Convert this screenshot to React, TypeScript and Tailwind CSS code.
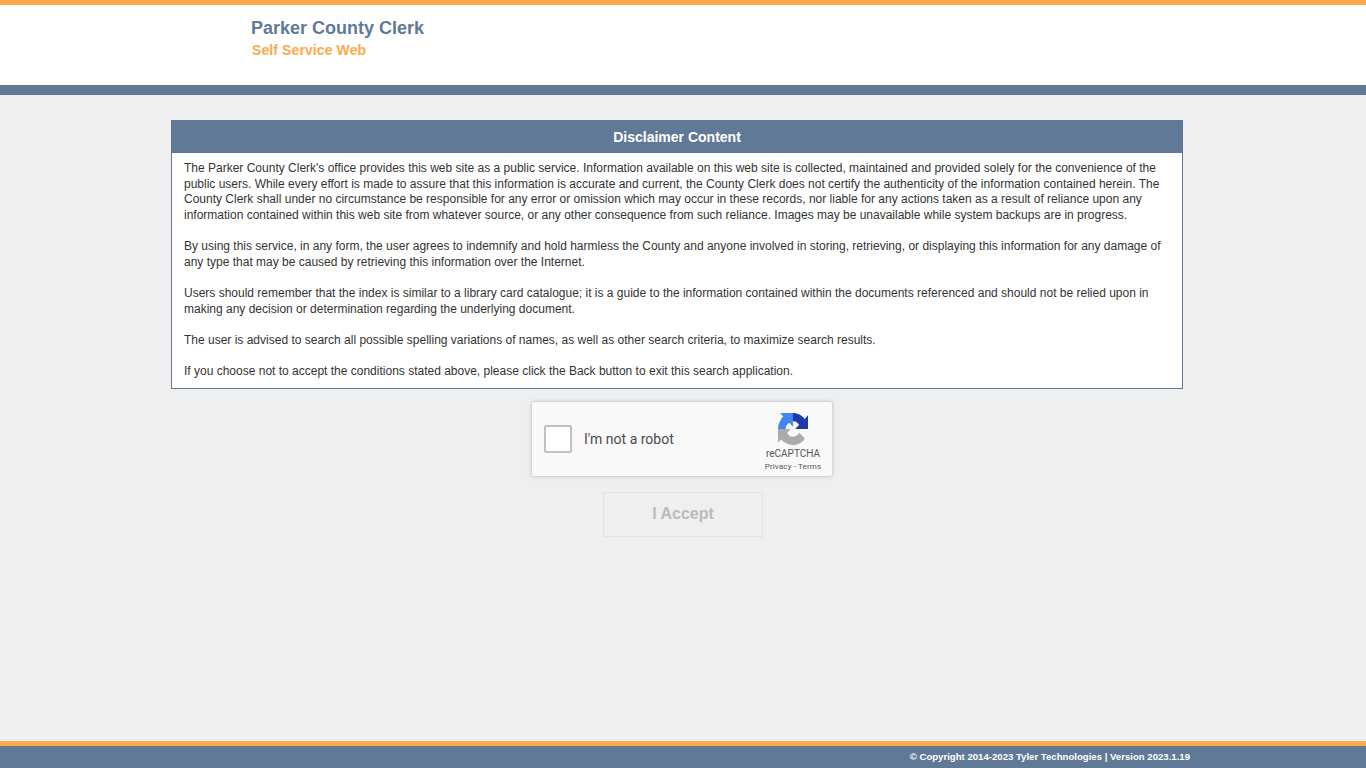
import React from "react";

function RecaptchaLogo() {
  return (
    <svg width="30" height="32" viewBox="0 0 64 64" preserveAspectRatio="none" className="block">
      <path d="M64 31.955l-.033-1.37V4.687l-7.16 7.16C50.948 4.674 42.033.093 32.05.093c-10.4 0-19.622 4.96-25.458 12.64l11.736 11.86a15.55 15.55 0 0 1 4.754-5.334c2.05-1.6 4.952-2.906 8.968-2.906.485 0 .86.057 1.135.163 4.976.393 9.288 3.14 11.828 7.124l-8.307 8.307L64 31.953" fill="#1c3aa9" />
      <path d="M31.862.094l-1.37.033H4.594l7.16 7.16C4.58 13.147 0 22.06 0 32.046c0 10.4 4.96 19.622 12.64 25.458l11.86-11.736a15.55 15.55 0 0 1-5.334-4.754c-1.6-2.05-2.906-4.952-2.906-8.968 0-.485.057-.86.163-1.135.393-4.976 3.14-9.288 7.124-11.828l8.307 8.307L31.86.094" fill="#4285f4" />
      <path d="M.001 32.045l.033 1.37v25.898l7.16-7.16c5.86 7.173 14.774 11.754 24.76 11.754 10.4 0 19.622-4.96 25.458-12.64l-11.736-11.86a15.55 15.55 0 0 1-4.754 5.334c-2.05 1.6-4.952 2.906-8.968 2.906-.485 0-.86-.057-1.135-.163-4.976-.393-9.288-3.14-11.828-7.124l8.307-8.307L0 32.047" fill="#ababab" />
    </svg>
  );
}

export default function App() {
  return (
    <div className="flex min-h-screen flex-col bg-[#efefef] font-['Liberation_Sans',Arial,sans-serif]">
      <header className="h-[95px] border-t-[5px] border-b-[10px] border-t-[#ffa94d] border-b-[#607996] bg-white pt-[11px] pl-[251px]">
        <h1 className="text-[18px] leading-[24px] font-bold text-[#607996]">Parker County Clerk</h1>
        <p className="ml-px text-[14px] leading-[20px] font-bold tracking-[0.1px] text-[#ffa94d]">Self Service Web</p>
      </header>

      <main className="flex flex-1 flex-col items-center pt-[25px] pr-[12px]">
        <section className="w-[1012px] border border-[#607996] bg-white">
          <h2 className="h-[32px] bg-[#607996] text-center text-[14px] leading-[32px] font-bold text-white">Disclaimer Content</h2>
          <div className="px-[12px] pt-[8.3px] pb-[8.7px] text-[12px] leading-[15.6px] text-[#333333]">
            <p>The Parker County Clerk's office provides this web site as a public service. Information available on this web site is collected, maintained and provided solely for the convenience of the public users. While every effort is made to assure that this information is accurate and current, the County Clerk does not certify the authenticity of the information contained herein. The County Clerk shall under no circumstance be responsible for any error or omission which may occur in these records, nor liable for any actions taken as a result of reliance upon any information contained within this web site from whatever source, or any other consequence from such reliance. Images may be unavailable while system backups are in progress.</p>
            <p className="mt-[15.6px]">By using this service, in any form, the user agrees to indemnify and hold harmless the County and anyone involved in storing, retrieving, or displaying this information for any damage of any type that may be caused by retrieving this information over the Internet.</p>
            <p className="mt-[15.6px]">Users should remember that the index is similar to a library card catalogue; it is a guide to the information contained within the documents referenced and should not be relied upon in making any decision or determination regarding the underlying document.</p>
            <p className="mt-[15.6px]">The user is advised to search all possible spelling variations of names, as well as other search criteria, to maximize search results.</p>
            <p className="mt-[15.6px]">If you choose not to accept the conditions stated above, please click the Back button to exit this search application.</p>
          </div>
        </section>

        <div className="mt-[12px] ml-[10px] flex h-[76px] w-[302px] items-center rounded-[3px] border border-[#d6d6d6] bg-[#f9f9f9] pl-[12px] font-['Roboto',sans-serif] shadow-[0_0_4px_rgba(0,0,0,0.12)]">
          <div className="h-[28px] w-[28px] rounded-[2px] border-2 border-[#c1c1c1] bg-white" />
          <span className="ml-[12px] flex-1 text-[14px] text-[#4a4a4a]">I'm not a robot</span>
          <div className="mr-[4px] flex w-[70px] flex-col items-center self-start pt-[11px]">
            <RecaptchaLogo />
            <span className="mt-[2px] text-[10px] leading-[13px] text-[#555555]">reCAPTCHA</span>
            <span className="mt-px text-[8px] leading-[12px] tracking-[0.15px] text-[#555555]">Privacy - Terms</span>
          </div>
        </div>

        <button disabled className="mt-[15px] ml-[12px] h-[45px] w-[160px] border border-[#e3e3e3] bg-[#efefef] pb-[2px] text-[16px] font-bold text-[#bbbbbb]">I Accept</button>
      </main>

      <footer className="h-[27px] border-t-[5px] border-t-[#ffa94d] bg-[#607996] pr-[176px] text-right text-[9.6px] leading-[22px] font-bold text-white">
        © Copyright 2014-2023 Tyler Technologies | Version 2023.1.19
      </footer>
    </div>
  );
}
